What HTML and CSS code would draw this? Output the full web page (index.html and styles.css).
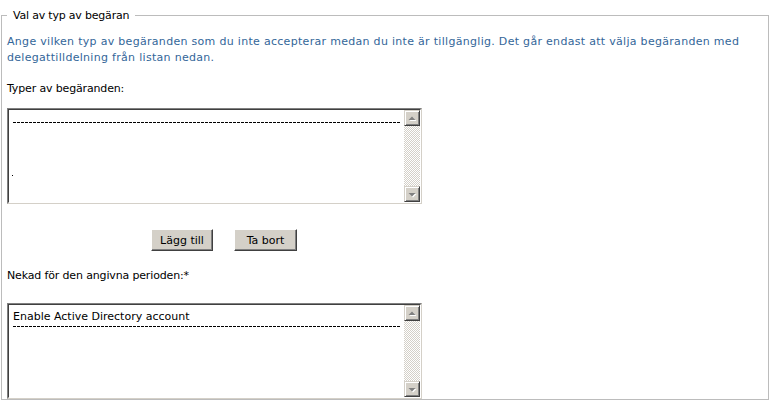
FILE: index.html
```html
<!DOCTYPE html>
<html lang="sv">
<head>
<meta charset="utf-8">
<title>Val av typ av begäran</title>
<link rel="stylesheet" href="styles.css">
</head>
<body>
<fieldset class="group">
  <legend class="group-title">Val av typ av begäran</legend>
  <p class="intro">Ange vilken typ av begäranden som du inte accepterar medan du inte är tillgänglig. Det går endast att välja begäranden med delegattilldelning från listan nedan.</p>
  <div class="label label-first">Typer av begäranden:</div>
  <div class="listbox list-first">
    <div class="listbox-body">
      <div class="items">
        <div class="sep sep-first"></div>
        <div class="dot"></div>
      </div>
      <div class="scrollbar">
        <div class="sb-btn"><svg width="14" height="14" viewBox="0 0 14 14"><polygon points="3.5,9 10.5,9 7,5.5" fill="#fff" transform="translate(1,1)"/><polygon points="3.5,9 10.5,9 7,5.5" fill="#808080"/></svg></div>
        <div class="sb-track"></div>
        <div class="sb-btn"><svg width="14" height="14" viewBox="0 0 14 14"><polygon points="3.5,6 10.5,6 7,9.5" fill="#fff" transform="translate(1,1)"/><polygon points="3.5,6 10.5,6 7,9.5" fill="#808080"/></svg></div>
      </div>
    </div>
  </div>
  <div class="buttons">
    <button class="btn btn-add" type="button">Lägg till</button>
    <button class="btn btn-remove" type="button">Ta bort</button>
  </div>
  <div class="label label-second">Nekad för den angivna perioden:*</div>
  <div class="listbox list-second">
    <div class="listbox-body">
      <div class="items">
        <div class="option">Enable Active Directory account</div>
        <div class="sep sep-second"></div>
      </div>
      <div class="scrollbar">
        <div class="sb-btn"><svg width="14" height="14" viewBox="0 0 14 14"><polygon points="3.5,9 10.5,9 7,5.5" fill="#fff" transform="translate(1,1)"/><polygon points="3.5,9 10.5,9 7,5.5" fill="#808080"/></svg></div>
        <div class="sb-track"></div>
        <div class="sb-btn"><svg width="14" height="14" viewBox="0 0 14 14"><polygon points="3.5,6 10.5,6 7,9.5" fill="#fff" transform="translate(1,1)"/><polygon points="3.5,6 10.5,6 7,9.5" fill="#808080"/></svg></div>
      </div>
    </div>
  </div>
</fieldset>
</body>
</html>
```

FILE: styles.css
```css
html, body {
  margin: 0;
  padding: 0;
  background: #fff;
}

body {
  font-family: "DejaVu Sans", Verdana, sans-serif;
  font-size: 11px;
  color: #000;
}

.group {
  margin: 9px 3px 0 1px;
  padding: 0 5px;
  border: 1px solid #bcbcbc;
  min-width: 0;
}

.group-title {
  padding: 0 6px;
  line-height: 13px;
  letter-spacing: -0.2px;
}

.intro {
  margin: 12px 0 0;
  line-height: 16px;
  color: #336699;
  letter-spacing: 0.3px;
}

.label {
  line-height: 16px;
  letter-spacing: -0.15px;
}

.label-first {
  margin-top: 15px;
}

.label-second {
  margin-top: 17px;
}

.listbox {
  width: 415px;
  height: 96px;
  box-sizing: border-box;
  border: 1px solid;
  border-color: #808080 #d4d0c8 #d4d0c8 #808080;
}

.list-first {
  margin-top: 11px;
}

.list-second {
  margin-top: 19px;
}

.listbox-body {
  display: flex;
  height: 100%;
  box-sizing: border-box;
  border: 1px solid;
  border-color: #404040 #fff #fff #404040;
  background: #fff;
}

.items {
  flex: 1;
  padding: 0 4px;
  overflow: hidden;
}

.option {
  padding-top: 5px;
  line-height: 13px;
  white-space: nowrap;
}

.sep {
  height: 1px;
  background: repeating-linear-gradient(to right, #000 0 3px, transparent 3px 4px);
}

.sep-first {
  margin-top: 12px;
}

.sep-second {
  margin-top: 3px;
}

.dot {
  width: 1px;
  height: 1px;
  margin: 52px 0 0 -1px;
  background: #000;
}

.scrollbar {
  flex: 0 0 16px;
  display: flex;
  flex-direction: column;
}

.sb-btn {
  width: 16px;
  height: 16px;
  box-sizing: border-box;
  display: flex;
  align-items: center;
  justify-content: center;
  background: #d4d0c8;
  border: 1px solid;
  border-color: #d4d0c8 #404040 #404040 #d4d0c8;
  box-shadow: inset 1px 1px 0 #fff, inset -1px -1px 0 #808080;
}

.sb-btn svg {
  display: block;
}

.sb-track {
  flex: 1;
  background: repeating-conic-gradient(#d4d0c8 0 25%, #fff 0 50%) 0 0 / 2px 2px;
}

.buttons {
  display: flex;
  gap: 21px;
  padding-left: 144px;
  margin-top: 25px;
}

.btn {
  height: 22px;
  padding: 0;
  font: inherit;
  color: #000;
  background: #d4d0c8;
  border: 1px solid;
  border-color: #fff #404040 #404040 #fff;
  box-shadow: inset -1px -1px 0 #808080;
}

.btn-add {
  width: 62px;
}

.btn-remove {
  width: 63px;
}
```
